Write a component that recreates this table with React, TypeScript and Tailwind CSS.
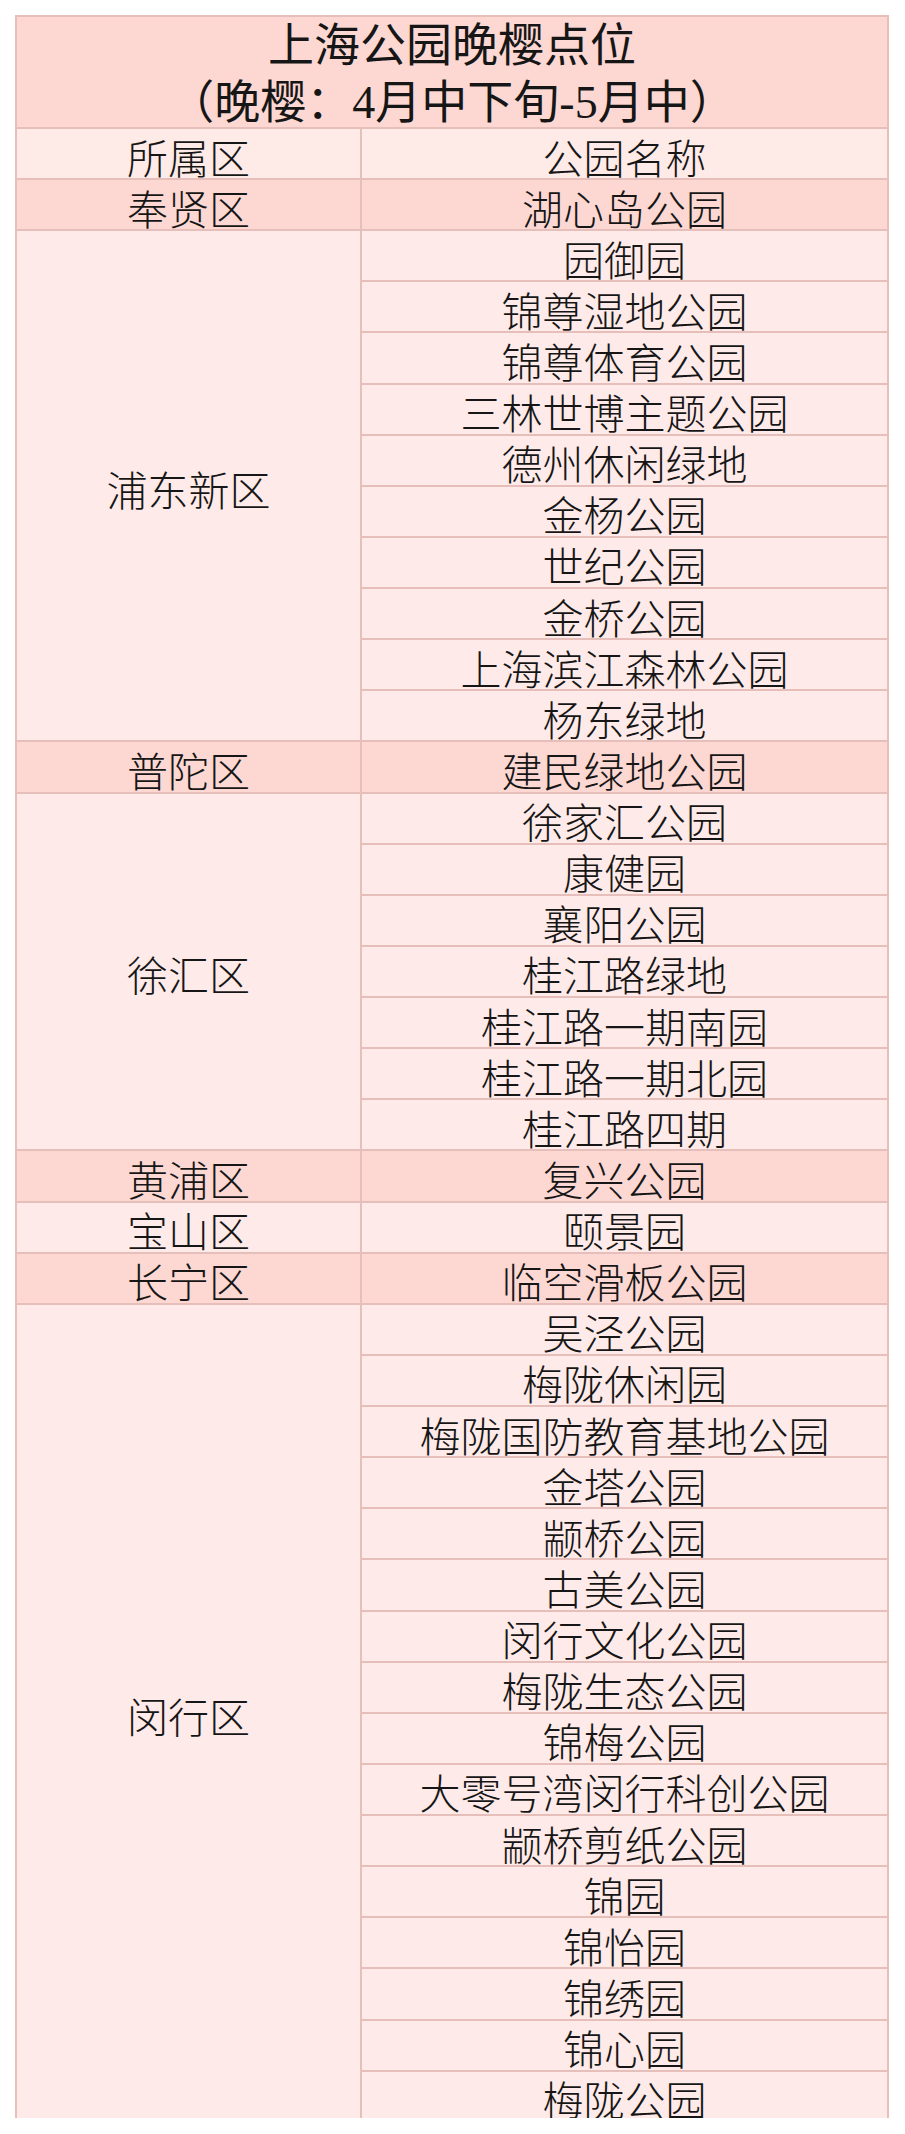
const districts: { name: string; parks: string[]; dark: boolean }[] = [
  { name: "奉贤区", parks: ["湖心岛公园"], dark: true },
  {
    name: "浦东新区",
    parks: [
      "园御园",
      "锦尊湿地公园",
      "锦尊体育公园",
      "三林世博主题公园",
      "德州休闲绿地",
      "金杨公园",
      "世纪公园",
      "金桥公园",
      "上海滨江森林公园",
      "杨东绿地",
    ],
    dark: false,
  },
  { name: "普陀区", parks: ["建民绿地公园"], dark: true },
  {
    name: "徐汇区",
    parks: ["徐家汇公园", "康健园", "襄阳公园", "桂江路绿地", "桂江路一期南园", "桂江路一期北园", "桂江路四期"],
    dark: false,
  },
  { name: "黄浦区", parks: ["复兴公园"], dark: true },
  { name: "宝山区", parks: ["颐景园"], dark: false },
  { name: "长宁区", parks: ["临空滑板公园"], dark: true },
  {
    name: "闵行区",
    parks: [
      "吴泾公园",
      "梅陇休闲园",
      "梅陇国防教育基地公园",
      "金塔公园",
      "颛桥公园",
      "古美公园",
      "闵行文化公园",
      "梅陇生态公园",
      "锦梅公园",
      "大零号湾闵行科创公园",
      "颛桥剪纸公园",
      "锦园",
      "锦怡园",
      "锦绣园",
      "锦心园",
      "梅陇公园",
    ],
    dark: false,
  },
];

const spanClass: Record<number, string> = {
  1: "row-span-1",
  7: "row-span-7",
  10: "row-span-10",
  16: "row-span-16",
};

export default function App() {
  return (
    <div className="h-[2134px] w-[905px] overflow-hidden bg-white pl-[15px] pt-[15px] font-['Noto_Sans_CJK_SC',sans-serif] text-[#161616]">
      <div className="h-[2103px] w-[874px] overflow-hidden border-x-2 border-t-2 border-[#e7bfba]">
        {/* Title */}
        <div className="h-[112px] border-b-2 border-[#e7bfba] bg-[#fdd8d3] text-center font-['Liberation_Serif','Noto_Sans_CJK_SC',serif] text-[46px] leading-[57px] [text-spacing-trim:space-all]">
          <div>上海公园晚樱点位</div>
          <div>（晚樱：4月中下旬-5月中）</div>
        </div>

        {/* Header */}
        <div className="grid h-[51px] grid-cols-[345px_1fr] bg-[#feeae7] text-[41px] font-light leading-none">
          <div className="flex items-center justify-center border-b-2 border-r-2 border-[#e7bfba] pt-[5px]">所属区</div>
          <div className="flex items-center justify-center border-b-2 border-[#e7bfba] pt-[5px]">公园名称</div>
        </div>

        {/* Body */}
        <div className="grid grid-cols-[345px_1fr] grid-rows-[repeat(38,51.14px)] text-[41px] font-light leading-none">
          {districts.map((d) => {
            const bg = d.dark ? "bg-[#fdd8d3]" : "bg-[#feeae8]";
            return [
              <div
                key={d.name}
                className={`col-start-1 flex items-center justify-center border-b-2 border-r-2 border-[#e7bfba] pt-[5px] ${spanClass[d.parks.length]} ${bg}`}
              >
                {d.name}
              </div>,
              ...d.parks.map((p) => (
                <div
                  key={d.name + p}
                  className={`col-start-2 flex items-center justify-center whitespace-nowrap border-b-2 border-[#e7bfba] pt-[5px] ${bg}`}
                >
                  {p}
                </div>
              )),
            ];
          })}
        </div>
      </div>
    </div>
  );
}
